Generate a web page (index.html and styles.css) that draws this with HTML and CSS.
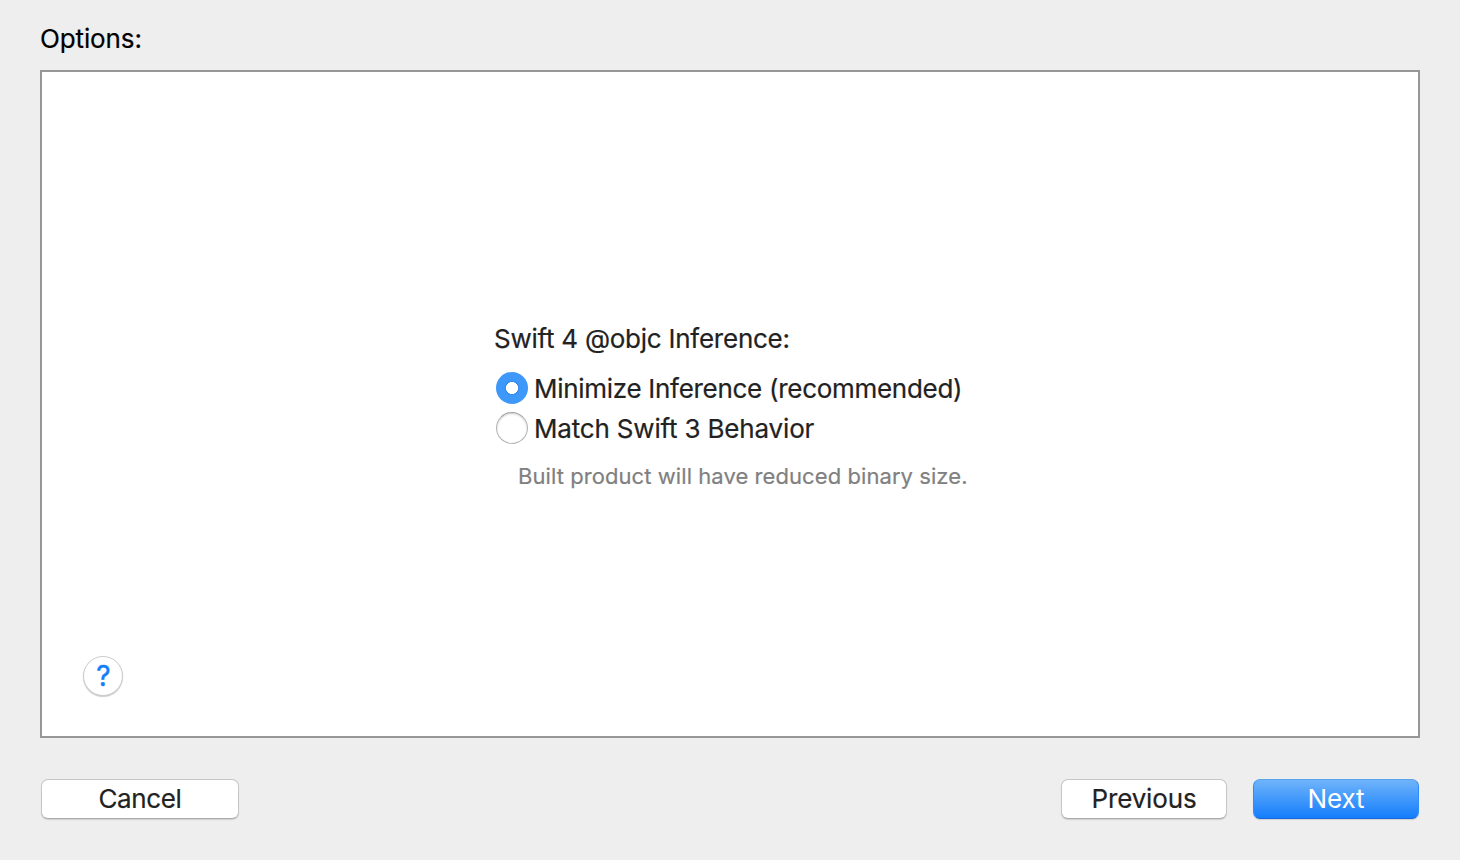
FILE: index.html
```html
<!DOCTYPE html>
<html lang="en">
<head>
<meta charset="utf-8">
<title>Options</title>
<link rel="stylesheet" href="styles.css">
</head>
<body>
<main class="sheet">
  <h1 class="heading"><span class="t-options">Options:</span></h1>
  <section class="panel">
    <div class="form">
      <div class="group-label"><span class="t-group">Swift 4 @objc Inference:</span></div>
      <div class="option"><span class="radio checked"></span><span class="t-min">Minimize Inference (recommended)</span></div>
      <div class="option"><span class="radio"></span><span class="t-match">Match Swift 3 Behavior</span></div>
      <div class="hint"><span class="t-hint">Built product will have reduced binary size.</span></div>
    </div>
    <button class="help">?</button>
  </section>
  <footer class="actions">
    <button class="btn cancel"><span class="t-cancel">Cancel</span></button>
    <button class="btn"><span class="t-prev">Previous</span></button>
    <button class="btn primary"><span class="t-next">Next</span></button>
  </footer>
</main>
</body>
</html>
```
FILE: styles.css
```css
* { box-sizing: border-box; }
body { margin: 0; background: #eee; color: #222; font-family: Inter, sans-serif; font-size: 26px; }
.sheet { width: 1460px; height: 860px; padding: 18px 40px 40px; display: flex; flex-direction: column; }
.heading { margin: 0; height: 52px; line-height: 42px; font-size: 26px; font-weight: 400; color: #000; }
span { white-space: nowrap; }
.heading, .form, .btn { -webkit-text-stroke: 0.2px currentColor; }
.t-options { letter-spacing: -0.12px; }
.t-group { letter-spacing: -0.25px; }
.t-min { letter-spacing: -0.29px; }
.t-match { letter-spacing: -0.18px; }
.t-hint { letter-spacing: 0.07px; }
.t-cancel { letter-spacing: -0.35px; }
.t-prev, .t-next { letter-spacing: -0.15px; }
.panel { height: 668px; border: 2px solid #979797; background: #fff; padding: 247px 41px 0; display: flex; flex-direction: column; align-items: flex-start; }
.form { margin-left: 411px; height: 337px; }
.group-label { height: 49px; line-height: 40px; }
.option { display: flex; align-items: center; height: 40px; margin-left: 2px; gap: 6px; }
.radio { width: 32px; height: 32px; border-radius: 50%; border: 1px solid #b6b6b6; border-top-color: #a0a0a0; background: #fff; box-shadow: inset 0 1px 2px #0003; }
.radio.checked { border: 0; background: radial-gradient(circle, #fff 0 5.7px, #328cee 6.3px, #3e98f9 8px); box-shadow: none; }
.hint { margin-left: 24px; line-height: 40px; margin-top: 8px; font-size: 22px; color: #808080; }
.help { width: 40px; height: 40px; padding: 0 0 0 1px; border: 1px solid #ccc; border-radius: 50%; background: #fff; color: #147efb; font: 400 28px/38px Inter, sans-serif; -webkit-text-stroke: 0.4px currentColor; box-shadow: 0 1px 1px #0003; }
.actions { display: flex; margin-top: 41px; }
.btn { width: 166px; height: 40px; margin-right: 26px; padding: 0; border: 1px solid #c6c6c6; border-bottom-color: #acacac; border-radius: 7px; background: #fff; color: #222; font: 26px/38px Inter, sans-serif; box-shadow: 0 1px 1px #0002; }
.cancel { width: 198px; margin-left: 1px; margin-right: auto; }
.primary { margin-right: 1px; color: #fff; background: linear-gradient(#6fb4fa, #147dfc); border-color: #5ca2ec #2e8df6 #1769e0; -webkit-text-stroke: 0; }
```
